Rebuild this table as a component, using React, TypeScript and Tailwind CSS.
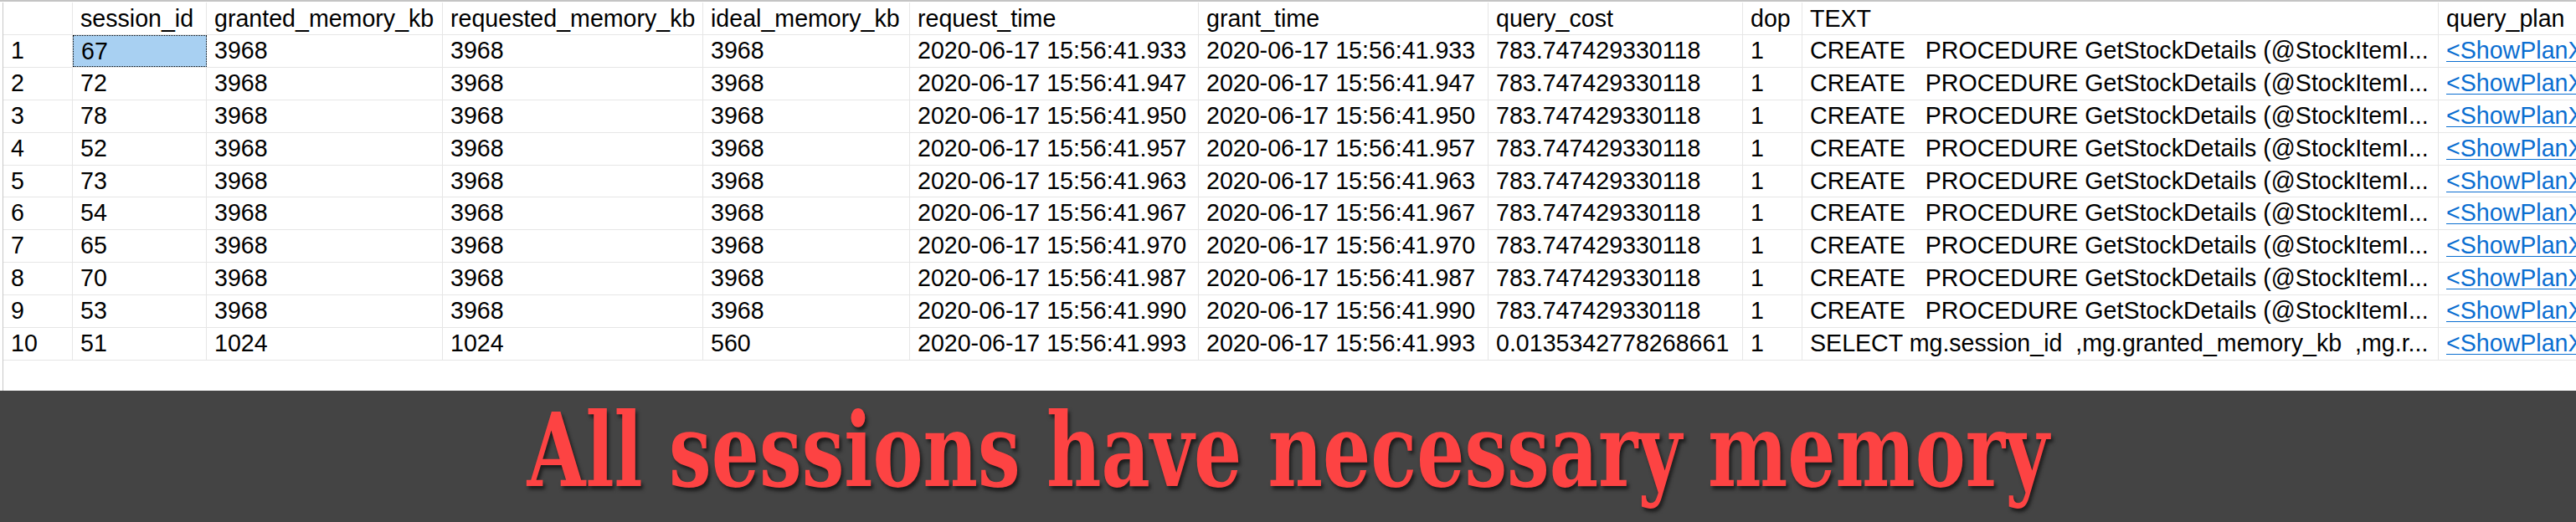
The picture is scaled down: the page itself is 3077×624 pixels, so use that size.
import React from "react";

const cols = [
  { key: "rn", label: "", w: "w-[83px]" },
  { key: "session_id", label: "session_id", w: "w-[160px]" },
  { key: "granted", label: "granted_memory_kb", w: "w-[282px]" },
  { key: "requested", label: "requested_memory_kb", w: "w-[311px]" },
  { key: "ideal", label: "ideal_memory_kb", w: "w-[247px]" },
  { key: "request_time", label: "request_time", w: "w-[345px]" },
  { key: "grant_time", label: "grant_time", w: "w-[346px]" },
  { key: "query_cost", label: "query_cost", w: "w-[304px]" },
  { key: "dop", label: "dop", w: "w-[71px]" },
  { key: "text", label: "TEXT", w: "w-[760px]" },
  { key: "plan", label: "query_plan", w: "w-[300px]" },
];

const ids = ["67", "72", "78", "52", "73", "54", "65", "70", "53", "51"];
const ms = ["933", "947", "950", "957", "963", "967", "970", "987", "990", "993"];

const rows = ids.map((id, i) => {
  const last = i === 9;
  const t = `2020-06-17 15:56:41.${ms[i]}`;
  return {
    rn: String(i + 1),
    session_id: id,
    granted: last ? "1024" : "3968",
    requested: last ? "1024" : "3968",
    ideal: last ? "560" : "3968",
    request_time: t,
    grant_time: t,
    query_cost: last ? "0.0135342778268661" : "783.747429330118",
    dop: "1",
    text: last
      ? "SELECT mg.session_id  ,mg.granted_memory_kb  ,mg.r..."
      : "CREATE   PROCEDURE GetStockDetails (@StockItemI...",
    plan: "<ShowPlanXML xmlns=...",
  } as Record<string, string>;
});

export default function App() {
  return (
    <div className="w-[3077px] h-[624px] overflow-hidden bg-white flex flex-col" style={{ fontFamily: '"Liberation Sans", Arial, sans-serif' }}>
      <div className="h-[467px] shrink-0 border-t-2 border-[#c4c4c4] pt-px pl-[3px] flex">
        <div className="flex-1 border-l border-[#c8c8c8] overflow-hidden">
          <div className="flex h-[39px] border-b border-[#e6e6e6]">
            {cols.map((c) => (
              <div key={c.key} className={`${c.w} shrink-0 border-r border-[#e6e6e6] pl-[9px] leading-[38px] text-[28.6px] text-black whitespace-pre overflow-hidden`}>
                {c.label}
              </div>
            ))}
          </div>
          {rows.map((r, i) => (
            <div key={i} className="flex h-[38.9px] border-b border-[#e6e6e6]">
              {cols.map((c) => {
                const selected = i === 0 && c.key === "session_id";
                const isPlan = c.key === "plan";
                return (
                  <div
                    key={c.key}
                    className={`${c.w} shrink-0 pl-[9px] leading-[37px] text-[28.6px] whitespace-pre overflow-hidden ${
                      selected
                        ? "bg-[#a8d0f2] border border-dotted border-black pl-[8px]"
                        : "border-r border-[#e6e6e6]"
                    } ${isPlan ? "text-[#0a6ed1]" : "text-black"}`}
                  >
                    {isPlan ? <span className="underline decoration-1 underline-offset-[3px]">{r[c.key]}</span> : r[c.key]}
                  </div>
                );
              })}
            </div>
          ))}
        </div>
      </div>
      <div className="flex-1 bg-[#444444] flex items-center justify-center pb-[16px]">
        <div
          className="text-[#fd4343] text-[122px] leading-none font-bold whitespace-pre scale-x-[0.82] [text-shadow:3px_4px_5px_rgba(0,0,0,0.6)]"
          style={{ fontFamily: '"DejaVu Serif Condensed", "DejaVu Serif", serif', fontStretch: "condensed" }}
        >
          All sessions have necessary memory
        </div>
      </div>
    </div>
  );
}
